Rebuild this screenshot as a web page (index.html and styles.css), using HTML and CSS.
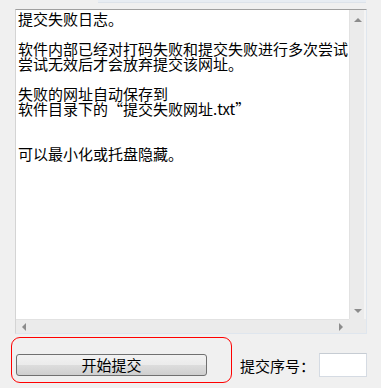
FILE: index.html
```html
<html>
<head>
<meta charset="utf-8">
<link rel="stylesheet" href="styles.css">
</head>
<body>
<div class="topstrip"><div class="tabbar"></div></div>

<div class="logbox">
  <div class="logtext">提交失败日志。<br>
<br>
软件内部已经对打码失败和提交失败进行多次尝试<br>
尝试无效后才会放弃提交该网址。<br>
<br>
失败的网址自动保存到<br>
软件目录下的“提交失败网址.txt”<br>
<br>
<br>
可以最小化或托盘隐藏。</div>
  <div class="vscroll">
    <span class="sbtn"><i class="arrow up"></i></span>
    <span class="sbtn"><i class="arrow down"></i></span>
  </div>
  <div class="hscroll">
    <span class="sbtn"><i class="arrow left"></i></span>
    <span class="sbtn"><i class="arrow right"></i></span>
  </div>
  <div class="corner"></div>
</div>

<div class="bottomrow">
  <div class="highlight">
    <button class="startbtn">开始提交</button>
  </div>
  <span class="seqlabel">提交序号：</span>
  <input class="seqinput" type="text">
</div>
</body>
</html>
```

FILE: styles.css
```css
body {
  margin: 0;
  padding: 0;
  background: #f0f0f0;
  font-family: "Noto Sans CJK SC", "Liberation Sans", sans-serif;
  font-size: 15px;
  color: #000;
  width: 381px;
  height: 388px;
  overflow: hidden;
}

.topstrip {
  height: 9px;
}

.tabbar {
  margin-left: 98px;
  width: 268px;
  height: 2px;
  background: #e8edf3;
  border-bottom: 1px solid #dde3ea;
}

.logbox {
  margin-left: 15px;
  width: 350px;
  height: 323px;
  border-top: 1px solid #a0a0a0;
  border-left: 1px solid #d4d4d4;
  border-right: 1px solid #dfe6ee;
  border-bottom: 1px solid #dfe6ee;
  display: grid;
  grid-template-columns: 333px 17px;
  grid-template-rows: 309px 14px;
  background: #fff;
}

.logtext {
  padding: 1px 0 0 2px;
  line-height: 15px;
  white-space: nowrap;
  background: #fff;
}

.vscroll {
  background: #ebebeb;
  border-left: 1px solid #e2e2e2;
  box-shadow: inset -2px 0 0 #f4f4f4;
  display: flex;
  flex-direction: column;
  justify-content: space-between;
}

.vscroll .sbtn {
  height: 17px;
  display: flex;
  align-items: center;
  justify-content: center;
}

.hscroll {
  background: #ebebeb;
  border-top: 1px solid #e2e2e2;
  display: flex;
  justify-content: space-between;
}

.hscroll .sbtn {
  width: 17px;
  display: flex;
  align-items: center;
  justify-content: center;
}

.corner {
  background: #ebebeb;
}

.arrow {
  width: 0;
  height: 0;
  display: block;
}

.arrow.up {
  border-left: 4px solid transparent;
  border-right: 4px solid transparent;
  border-bottom: 4px solid #8c8c8c;
  margin-top: 2px;
}

.arrow.down {
  border-left: 4px solid transparent;
  border-right: 4px solid transparent;
  border-top: 4px solid #8c8c8c;
}

.arrow.left {
  border-top: 4px solid transparent;
  border-bottom: 4px solid transparent;
  border-right: 4px solid #8c8c8c;
  margin-left: -2px;
}

.arrow.right {
  border-top: 4px solid transparent;
  border-bottom: 4px solid transparent;
  border-left: 4px solid #8c8c8c;
}

.bottomrow {
  margin-top: 3px;
  display: flex;
  align-items: flex-end;
}

.highlight {
  margin-left: 11px;
  width: 215px;
  height: 28px;
  padding: 16px 0 0 4px;
  border: 1px solid #ff0000;
  border-radius: 9px;
}

.startbtn {
  width: 191px;
  height: 22px;
  margin: 0;
  padding: 0;
  border: 1px solid #707070;
  border-radius: 3px;
  background: linear-gradient(#f2f2f2 0%, #ebebeb 50%, #dddddd 50%, #cfcfcf 100%);
  font-family: "Noto Sans CJK SC", "Liberation Sans", sans-serif;
  font-size: 15px;
  line-height: 18px;
  color: #000;
}

.seqlabel {
  margin-left: 8px;
  margin-bottom: 10px;
  line-height: 15px;
  white-space: nowrap;
}

.seqinput {
  margin: 0 0 6px 4px;
  padding: 0;
  width: 48px;
  height: 24px;
  box-sizing: border-box;
  border: 1px solid #d5dbe3;
  border-top-color: #c6ccd3;
  background: #fff;
  outline: none;
}
```
